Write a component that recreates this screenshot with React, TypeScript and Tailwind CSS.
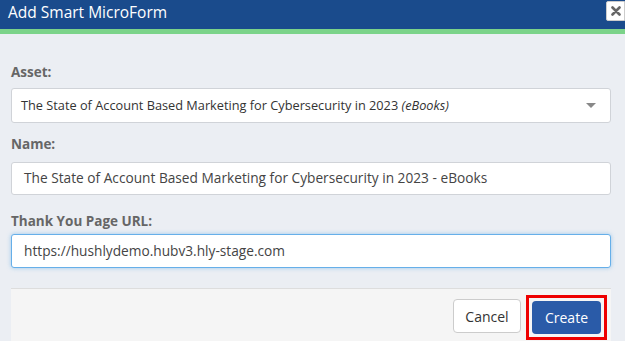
import React from "react";

export default function App() {
  const font = { fontFamily: '"Open Sans", "Noto Sans", sans-serif' };
  return (
    <div className="w-[625px] h-[341px] bg-[#ebeef3] overflow-hidden" style={font}>
      <div className="h-[29px] bg-[#1a4b8c] flex items-start justify-between">
        <div className="text-white text-[15.5px] leading-[22px] pl-[8px] pt-[1px]">Add Smart MicroForm</div>
        <div className="w-[19px] h-[20px] mt-[1px] bg-white border border-[#ccc] rounded-l-[2px] flex items-center justify-center">
          <svg width="10" height="10" viewBox="0 0 10 10">
            <path d="M1.5 1.5 L8.5 8.5 M8.5 1.5 L1.5 8.5" stroke="#666" strokeWidth="2.6" strokeLinecap="round" />
          </svg>
        </div>
      </div>
      <div className="h-[5px] bg-[#7bd389]" />
      <div className="pl-[11px] pr-[14px]">
        <div className="pt-[28px] text-[13.5px] font-bold text-[#666] leading-[20px]">Asset:</div>
        <div className="mt-[6px] h-[35px] bg-white border border-[#d0d3d8] rounded-[3px] flex items-center justify-between pl-[9px] pr-[14px] text-[12.75px] text-[#333]">
          <span>
            The State of Account Based Marketing for Cybersecurity in 2023 <i>(eBooks)</i>
          </span>
          <svg width="10" height="6" viewBox="0 0 10 6">
            <path d="M0 0 L10 0 L5 5 Z" fill="#888" />
          </svg>
        </div>
        <div className="pt-[11px] text-[13.5px] font-bold text-[#666] leading-[20px]">Name:</div>
        <div className="mt-[8px] h-[33px] bg-white border border-[#d0d3d8] rounded-[3px] flex items-center pl-[12px] text-[13.7px] text-[#444]">
          The State of Account Based Marketing for Cybersecurity in 2023 - eBooks
        </div>
        <div className="pt-[16px] text-[13.5px] font-bold text-[#666] leading-[20px]">Thank You Page URL:</div>
        <div className="mt-[3px] h-[34px] bg-white border border-[#66afe9] shadow-[0_0_4px_rgba(102,175,233,0.6)] rounded-[3px] flex items-center pl-[12px] text-[13.7px] text-[#444]">
          https://hushlydemo.hubv3.hly-stage.com
        </div>
        <div className="mt-[20px] h-[60px] bg-[#f5f5f5] border-t border-[#ddd] flex items-start justify-end pt-[10px] pr-[4px]">
          <div className="h-[34px] w-[68px] bg-white border border-[#ccc] rounded-[4px] flex items-center justify-center text-[14px] text-[#333]">
            Cancel
          </div>
          <div className="ml-[5px] -mt-[4px] border-[3px] border-[#e00] p-[3px]">
            <div className="h-[33px] w-[69px] bg-[#2a5ba8] rounded-[4px] flex items-center justify-center text-[14px] text-white">
              Create
            </div>
          </div>
        </div>
      </div>
    </div>
  );
}
